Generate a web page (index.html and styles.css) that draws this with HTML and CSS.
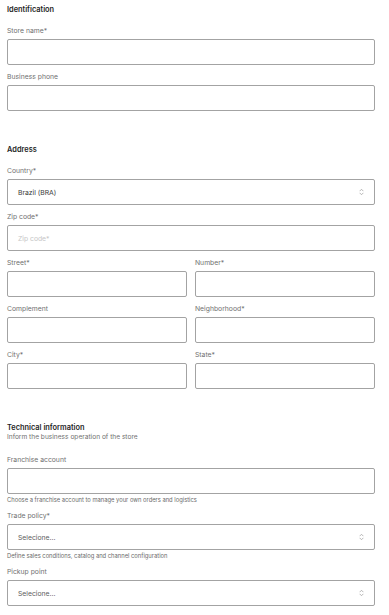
FILE: index.html
```html
<!DOCTYPE html>
<html lang="en">
<head>
<meta charset="utf-8">
<title>Store form</title>
<link rel="stylesheet" href="styles.css">
</head>
<body>
<main class="page">
  <section class="section">
    <h2 class="section-title">Identification</h2>
    <div class="fields">
      <div class="field">
        <label class="label">Store name*</label>
        <div class="input"></div>
      </div>
      <div class="field">
        <label class="label">Business phone</label>
        <div class="input"></div>
      </div>
    </div>
  </section>

  <section class="section">
    <h2 class="section-title">Address</h2>
    <div class="fields">
      <div class="field">
        <label class="label">Country*</label>
        <div class="input select"><span class="value">Brazil (BRA)</span><svg class="chev" viewBox="0 0 6 10" width="5" height="8"><path d="M1 3.6 L3 1.6 L5 3.6 M1 6.4 L3 8.4 L5 6.4" fill="none" stroke="#9a9a9a" stroke-width="0.9" stroke-linecap="round" stroke-linejoin="round"/></svg></div>
      </div>
      <div class="field">
        <label class="label">Zip code*</label>
        <div class="input"><span class="placeholder">Zip code*</span></div>
      </div>
      <div class="row">
        <div class="field">
          <label class="label">Street*</label>
          <div class="input"></div>
        </div>
        <div class="field">
          <label class="label">Number*</label>
          <div class="input"></div>
        </div>
      </div>
      <div class="row">
        <div class="field">
          <label class="label">Complement</label>
          <div class="input"></div>
        </div>
        <div class="field">
          <label class="label">Neighborhood*</label>
          <div class="input"></div>
        </div>
      </div>
      <div class="row">
        <div class="field">
          <label class="label">City*</label>
          <div class="input"></div>
        </div>
        <div class="field">
          <label class="label">State*</label>
          <div class="input"></div>
        </div>
      </div>
    </div>
  </section>

  <section class="section">
    <h2 class="section-title">Technical information</h2>
    <p class="section-sub">Inform the business operation of the store</p>
    <div class="fields fields-after-sub">
      <div class="field">
        <label class="label">Franchise account</label>
        <div class="input"></div>
        <p class="helper">Choose a franchise account to manage your own orders and logistics</p>
      </div>
      <div class="field">
        <label class="label">Trade policy*</label>
        <div class="input select"><span class="value muted">Selecione...</span><svg class="chev" viewBox="0 0 6 10" width="5" height="8"><path d="M1 3.6 L3 1.6 L5 3.6 M1 6.4 L3 8.4 L5 6.4" fill="none" stroke="#9a9a9a" stroke-width="0.9" stroke-linecap="round" stroke-linejoin="round"/></svg></div>
        <p class="helper">Define sales conditions, catalog and channel configuration</p>
      </div>
      <div class="field">
        <label class="label">Pickup point</label>
        <div class="input select"><span class="value muted">Selecione...</span><svg class="chev" viewBox="0 0 6 10" width="5" height="8"><path d="M1 3.6 L3 1.6 L5 3.6 M1 6.4 L3 8.4 L5 6.4" fill="none" stroke="#9a9a9a" stroke-width="0.9" stroke-linecap="round" stroke-linejoin="round"/></svg></div>
      </div>
    </div>
  </section>
</main>
</body>
</html>
```

FILE: styles.css
```css
* { box-sizing: border-box; }
html, body { margin: 0; padding: 0; background: #ffffff; }
body {
  font-family: Inter, "Noto Sans", "Liberation Sans", sans-serif;
  color: #1f1f1f;
}
.page {
  padding: 5px 14px 0 7px;
  display: flex;
  flex-direction: column;
  gap: 34px;
}
.section { display: flex; flex-direction: column; }
.section-title {
  margin: 0;
  font-size: 7.4px;
  line-height: 9px;
  font-weight: 600;
  color: #1f1f1f;
}
.section-sub {
  margin: 0;
  font-size: 6.6px;
  line-height: 10px;
  color: #707070;
}
.fields {
  margin-top: 12px;
  display: flex;
  flex-direction: column;
  gap: 7px;
}
.fields-after-sub { margin-top: 13px; }
.row {
  display: grid;
  grid-template-columns: 1fr 1fr;
  gap: 8px;
}
.field { display: flex; flex-direction: column; min-width: 0; }
.label {
  display: block;
  font-size: 6.8px;
  line-height: 9px;
  color: #707070;
  margin-bottom: 4px;
}
.input {
  height: 26px;
  border: 1px solid #a3a3a3;
  border-radius: 2px;
  background: #fff;
  display: flex;
  align-items: center;
  padding: 0 10px;
}
.select { justify-content: space-between; }
.value {
  font-size: 6.8px;
  color: #3a3a3a;
}
.value.muted { color: #5e5e5e; }
.placeholder {
  font-size: 6.8px;
  color: #c6c6c6;
}
.chev { display: block; }
.helper {
  margin: 2px 0 0;
  font-size: 5.8px;
  line-height: 8px;
  color: #6a6a6a;
}
```
